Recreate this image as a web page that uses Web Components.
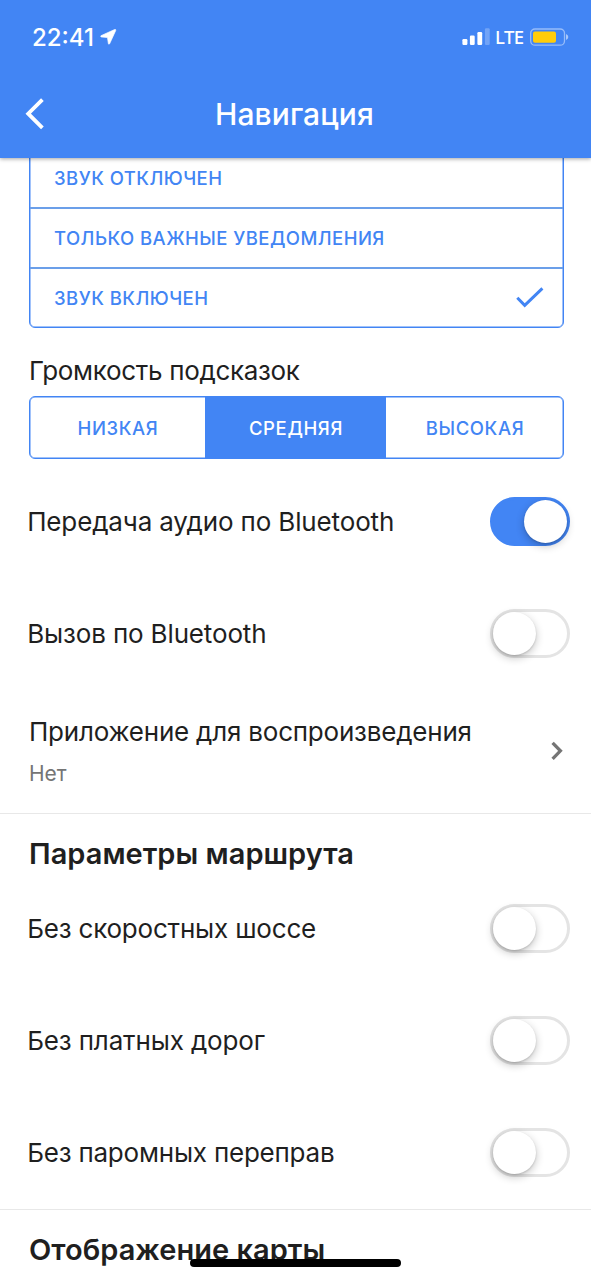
<!DOCTYPE html>
<html lang="ru">
<head>
<meta charset="utf-8">
<title>Навигация</title>
<style>
html,body{margin:0;height:1280px;overflow:hidden;background:#fff}
body{font-family:Inter,"Noto Sans",sans-serif;color:#1f1f1f}
</style>
</head>
<body>
<settings-screen></settings-screen>
<script>
const define=(name,css,html)=>customElements.define(name,class extends HTMLElement{
  constructor(){
    super();
    this.attachShadow({mode:'open'}).innerHTML='<style>*{box-sizing:border-box}svg{display:block}'+css+'</style>'+html;
  }
});

define('status-bar',`
:host{display:flex;height:72px;justify-content:space-between;color:#fff;padding:0 22px 0 32px}
.side{display:flex;height:73px;align-items:center}
.time{font-size:24px;font-weight:540;line-height:30px;width:67px;padding-top:2px}
.net{font:500 18.5px/30px "Noto Sans",sans-serif;letter-spacing:-.6px;margin:0 6.5px 0 5px}`,`
<div class="side"><span class="time">22:41</span>
<svg width="18" height="18" viewBox="99 27.5 18 18"><path d="M114.7 29 101 35.2Q100.2 36 101.2 36.4L107.5 37 108.4 43.3Q108.8 44.2 109.6 43.3L115.7 30Q116 28.6 114.7 29Z" fill="#fff" stroke="#fff" stroke-width=".7"/></svg></div>
<div class="side">
<svg width="28" height="18" viewBox="462.6 28 28 18" fill="#fff"><rect x="463" y="39" width="5" height="6" rx="1.2"/><rect x="470.5" y="35.5" width="4.8" height="9.5" rx="1.2"/><rect x="478" y="32" width="4.8" height="13" rx="1.2"/><rect x="485.5" y="28.3" width="4.8" height="16.7" rx="1.2" opacity=".25"/></svg>
<span class="net">LTE</span>
<svg width="39" height="18" viewBox="530 27.5 39 18"><rect x="530.7" y="28.5" width="33.8" height="16.2" rx="4.3" fill="none" stroke="#fff" stroke-opacity=".45" stroke-width="1.3"/><rect x="533" y="31" width="23" height="11.2" rx="2" fill="#ffcc0a"/><path d="M566 33.6Q568.3 34.5 568.3 36.6T566 39.6Z" fill="#fff" fill-opacity=".55"/></svg></div>`);

define('nav-header',`
:host{display:block;height:158px;background:#4285f4;position:relative;z-index:2;box-shadow:0 1px 4px rgba(0,0,0,.36)}
.bar{display:grid;grid-template-columns:60px 1fr 62px;height:85px;align-items:center}
h1{margin:0;text-align:center;color:#fff;font-size:30px;font-weight:540;line-height:36px;letter-spacing:.1px;padding-bottom:1px}
svg{margin:0 0 1px 24px}`,`
<status-bar></status-bar>
<div class="bar"><svg width="22" height="34" viewBox="24 97 22 34"><path d="M42.4 99.6 28.2 113.7 42.4 127.8" fill="none" stroke="#fff" stroke-width="3.8"/></svg>
<h1><slot></slot></h1></div>`);

define('option-row',`
:host{display:flex;height:60px;align-items:center;justify-content:space-between;padding:0 18px 0 24px;border-bottom:2px solid #6b9fe9;color:#4285f4;font-size:18.5px;font-weight:550;letter-spacing:.45px;line-height:28px}
:host(:last-child){border:0;height:58px}
svg{display:none}
:host([checked]) svg{display:block}`,`
<span><slot></slot></span>
<svg width="30" height="24" viewBox="515 286 30 24"><path d="M517.3 297.8 524.7 305.3 542.4 288.4" fill="none" stroke="#4285f4" stroke-width="3"/></svg>`);

define('option-list',`
:host{display:block;margin:-10px 27px 0 29px;border:1px solid #4285f4;border-radius:6px;box-shadow:inset 0 0 0 .5px #4285f4}`,`<slot></slot>`);

define('segment-item',`
:host{display:flex;align-items:center;justify-content:center;color:#4285f4;font-size:18.5px;font-weight:550;letter-spacing:.62px;line-height:28px;padding-left:1px}
:host([selected]){background:#4285f4;color:#fff}`,`<span><slot></slot></span>`);

define('segmented-control',`
:host{display:grid;grid-template-columns:175px 181px 1fr;height:63px;margin:0 27px 0 29px;border:1px solid #4285f4;border-radius:6px;box-shadow:inset 0 0 0 .5px #4285f4}`,`<slot></slot>`);

define('toggle-switch',`
:host{display:flex;flex:none;width:80px;height:49px;border-radius:25px;border:3px solid #e4e4e4;background:#fff}
i{width:43px;height:43px;border-radius:50%;background:#fff;box-shadow:0 3px 8px rgba(0,0,0,.24),0 1px 2px rgba(0,0,0,.14)}
:host([on]){background:#4285f4;border-color:#4285f4;justify-content:flex-end}`,`<i></i>`);

define('switch-row',`
:host{display:flex;height:112px;align-items:center;justify-content:space-between;padding:0 21px 0 27.2px;font-size:26px;line-height:36px;letter-spacing:var(--track,-.15px)}
.label{padding-top:1px}`,`
<span class="label"><slot></slot></span><slot name="control"></slot>`);

define('link-row',`
:host{display:flex;height:124px;align-items:center;justify-content:space-between;padding:0 27px 0 29px}
.text{padding-top:4px}
.title{font-size:26px;line-height:42px;letter-spacing:-.21px}
.value{font-size:21px;line-height:42px;color:#757575}`,`
<div class="text"><div class="title"><slot></slot></div><div class="value"><slot name="value"></slot></div></div>
<svg width="14" height="22" viewBox="550 740 14 22"><path d="M552.6 742.8 560.4 750.8 552.6 758.8" fill="none" stroke="#757575" stroke-width="3.3"/></svg>`);

define('group-label',`
:host{display:block;padding:25px 28px 7px 29px;font-size:26px;line-height:36px;letter-spacing:-.32px}`,`<slot></slot>`);

define('section-title',`
:host{display:block;height:59px;border-top:1px solid #e8e8e8;padding:22px 28px 0 29px;font-size:29px;font-weight:600;line-height:36px;letter-spacing:.02px}`,`<slot></slot>`);

define('home-indicator',`
:host{position:absolute;left:190px;top:1259px;width:211px;height:8px;border-radius:4px;background:#000;z-index:3}`,``);

define('settings-screen',`
:host{display:block;position:relative;width:591px;height:1280px;overflow:hidden;background:#fff}
.audio{padding-top:6px}
.route{padding-bottom:1px}`,`
<nav-header>Навигация</nav-header>
<option-list>
<option-row>ЗВУК ОТКЛЮЧЕН</option-row>
<option-row>ТОЛЬКО ВАЖНЫЕ УВЕДОМЛЕНИЯ</option-row>
<option-row checked>ЗВУК ВКЛЮЧЕН</option-row>
</option-list>
<group-label>Громкость подсказок</group-label>
<segmented-control>
<segment-item>НИЗКАЯ</segment-item>
<segment-item selected>СРЕДНЯЯ</segment-item>
<segment-item>ВЫСОКАЯ</segment-item>
</segmented-control>
<div class="audio">
<switch-row>Передача аудио по Bluetooth<toggle-switch slot="control" on></toggle-switch></switch-row>
<switch-row>Вызов по Bluetooth<toggle-switch slot="control"></toggle-switch></switch-row>
</div>
<link-row>Приложение для воспроизведения<span slot="value">Нет</span></link-row>
<section-title>Параметры маршрута</section-title>
<div class="route">
<switch-row style="--track:-.2px">Без скоростных шоссе<toggle-switch slot="control"></toggle-switch></switch-row>
<switch-row>Без платных дорог<toggle-switch slot="control"></toggle-switch></switch-row>
<switch-row style="--track:-.22px">Без паромных переправ<toggle-switch slot="control"></toggle-switch></switch-row>
</div>
<section-title>Отображение карты</section-title>
<home-indicator></home-indicator>`);
</script>
</body>
</html>
